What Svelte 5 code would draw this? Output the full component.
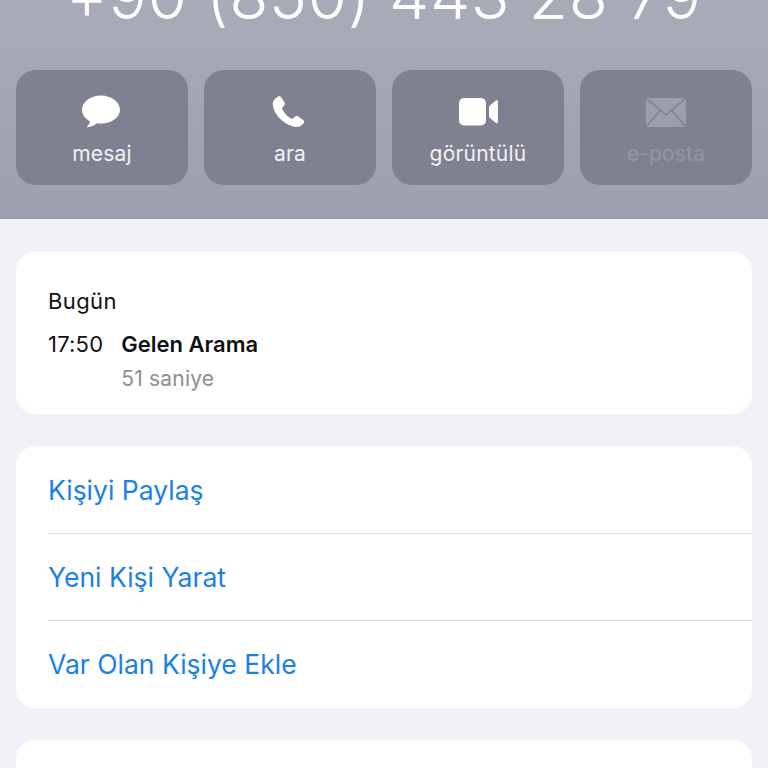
<script>
  const actions = [
    { label: 'mesaj', icon: 'msg' },
    { label: 'ara', icon: 'phone' },
    { label: 'görüntülü', icon: 'video' },
    { label: 'e-posta', icon: 'mail', off: true }
  ];
</script>

<div class="page">
  <header class="head">
    <div class="number">+90 (850) 443 28 79</div>
    <div class="actions">
      {#each actions as a}
        <div class="action" class:off={a.off}>
          <svg class="icon" viewBox="0 0 44 36" width="44" height="36" aria-hidden="true">
            {#if a.icon === 'msg'}
              <path class="fill" d="M21 1.500C10.500 1.500 2 8 2 15.800c0 4.800 3.100 9 7.900 11.600-.4 1.900-1.500 3.700-2.700 5.100-.3.400 0 .9.500.8 3.600-.5 6.800-1.900 9.200-4 1.300.2 2.700.4 4.100.4 10.500 0 19-6.200 19-13.900S31.500 1.500 21 1.500z"/>
            {:else if a.icon === 'phone'}
              <path class="fill" d="M9.800 2.700c1-.7 2.500-.6 3.300.4l3.400 5.300c.7 1.100.5 2.300-.3 3.100l-1.900 1.900c-.5.500-.5 1.100-.2 1.700 1.900 3.800 5.100 7.400 9 9.500.6.300 1.200.2 1.700-.2l2.300-1.900c.9-.7 2.200-.8 3.100-.1l5 3.500c1 .8 1.100 2.300.3 3.300-1.700 2.100-4.100 3.900-6.500 3.800-5.900-.2-12.400-3.600-17.100-8.500C7.200 20 4.600 14 4.800 9.100 4.900 6.400 7.500 4 9.800 2.700z"/>
            {:else if a.icon === 'video'}
              <rect class="fill" x="3" y="4" width="27" height="27.500" rx="5"/>
              <path class="fill" d="M33 13.500c0-.8.300-1.400.9-1.900l6-5.100c.8-.6 2-.1 2 1v20.500c0 1.100-1.200 1.600-2 1l-6-5c-.6-.5-.9-1.100-.9-1.900z"/>
            {:else}
              <rect class="fill" x="2" y="4" width="40" height="29"/>
              <path class="line" d="M2 4l20 17L42 4M2 33l14-16.500M42 33L28 16.500"/>
            {/if}
          </svg>
          <span class="label">{a.label}</span>
        </div>
      {/each}
    </div>
  </header>

  <main class="body">
    <section class="card log">
      <div class="day">Bugün</div>
      <div class="entry">
        <span class="time">17:50</span>
        <div class="details">
          <div class="kind">Gelen Arama</div>
          <div class="dur">51 saniye</div>
        </div>
      </div>
    </section>

    <section class="card links">
      <div class="link">Kişiyi Paylaş</div>
      <div class="link">Yeni Kişi Yarat</div>
      <div class="link">Var Olan Kişiye Ekle</div>
    </section>

    <section class="card stub"></section>
  </main>
</div>

<style>
  :global(body) {
    margin: 0;
    background: #f1f1f7;
  }
  .page {
    width: 768px;
    height: 768px;
    overflow: hidden;
    font-family: Inter, "Liberation Sans", sans-serif;
    background: #f1f1f7;
  }
  .head {
    height: 219px;
    box-sizing: border-box;
    padding: 0 16px;
    overflow: hidden;
    background: linear-gradient(#a9abb9, #9e9fae);
  }
  .number {
    margin-top: -42px;
    height: 112px;
    text-align: center;
    font-size: 64px;
    line-height: 76px;
    font-weight: 300;
    color: #fff;
    white-space: nowrap;
    letter-spacing: 0.6px;
  }
  .actions {
    display: grid;
    grid-template-columns: repeat(4, 172px);
    gap: 16px;
  }
  .action {
    height: 115px;
    border-radius: 20px;
    background: #7f8190;
    display: flex;
    flex-direction: column;
    align-items: center;
    padding-top: 24px;
    box-sizing: border-box;
    color: #fff;
  }
  .icon {
    display: block;
  }
  .fill {
    fill: #fff;
  }
  .line {
    fill: none;
    stroke: #7f8190;
    stroke-width: 1.500;
  }
  .label {
    margin-top: 11px;
    font-size: 21px;
    line-height: 25px;
    letter-spacing: 0.2px;
    color: #f2f2f6;
  }
  .off .fill {
    fill: #9c9eac;
  }
  .off .label {
    color: #9395a4;
  }
  .body {
    padding: 33px 16px 0;
    display: flex;
    flex-direction: column;
    gap: 32px;
  }
  .card {
    background: #fff;
    border-radius: 20px;
  }
  .log {
    height: 162px;
    box-sizing: border-box;
    padding: 36px 32px 0;
    color: #111;
  }
  .day {
    font-size: 22px;
    line-height: 27px;
    letter-spacing: 0.4px;
  }
  .entry {
    margin-top: 16px;
    display: flex;
    gap: 18px;
    font-size: 22px;
  }
  .time {
    line-height: 27px;
    letter-spacing: 0.2px;
  }
  .kind {
    font-weight: 600;
    line-height: 27px;
  }
  .dur {
    margin-top: 8px;
    font-size: 21px;
    line-height: 26px;
    letter-spacing: 0.2px;
    color: #8e8e93;
  }
  .links {
    padding: 1px 0 0 32px;
    overflow: hidden;
  }
  .link {
    line-height: 87px;
    font-size: 26.500px;
    color: #1a7fe8;
    border-bottom: 1px solid #dcdce0;
    height: 86px;
  }
  .link:last-child {
    border-bottom: 0;
    height: 87px;
  }
  .stub {
    height: 120px;
  }
</style>
